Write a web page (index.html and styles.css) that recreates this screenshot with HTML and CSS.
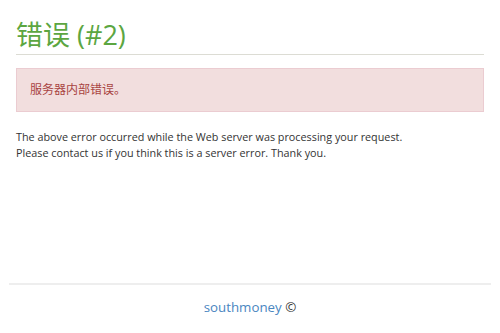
FILE: index.html
```html
<!DOCTYPE html>
<html lang="zh-CN">
<head>
  <meta charset="UTF-8" />
  <meta name="viewport" content="width=device-width, initial-scale=1.0"/>
  <title>错误 (#2)</title>
  <link rel="stylesheet" href="styles.css">
</head>
<body>

  <div class="wrap">
    <div class="container">
      <h1 class="page-title">错误 (#2)</h1>

      <div class="alert">服务器内部错误。</div>

      <p class="note">
        The above error occurred while the Web server was processing your request.<br>
        Please contact us if you think this is a server error. Thank you.
      </p>
    </div>
  </div>

  <footer class="footer">
    <a href="#">southmoney</a> ©
  </footer>

</body>
</html>
```

FILE: styles.css
```css
body {
  margin: 0;
  font-family: 'Open Sans', 'Noto Sans CJK SC', sans-serif;
  font-size: 10.8px;
  color: #333;
  background: #fff;
}

.wrap {
  min-height: 274px;
  padding-top: 1px;
}

.container {
  padding: 0 16px;
}

.page-title {
  margin: 17px 0 0;
  padding-bottom: 2px;
  font-size: 27px;
  font-weight: normal;
  line-height: 34px;
  color: #5ca641;
  border-bottom: 1px solid #dcdcd4;
}

.alert {
  margin-top: 13px;
  padding: 13px 13px;
  font-size: 12px;
  line-height: 16px;
  color: #a94442;
  background: #f2dede;
  border: 1px solid #ebccd1;
}

.note {
  margin: 17px 0 0;
  line-height: 16px;
}

.footer {
  margin: 8px 9px 0;
  border-top: 2px solid #eee;
  padding-top: 12px;
  text-align: center;
  font-size: 13.3px;
  line-height: 20px;
}

.footer a {
  color: #4a86bf;
  text-decoration: none;
}
```
